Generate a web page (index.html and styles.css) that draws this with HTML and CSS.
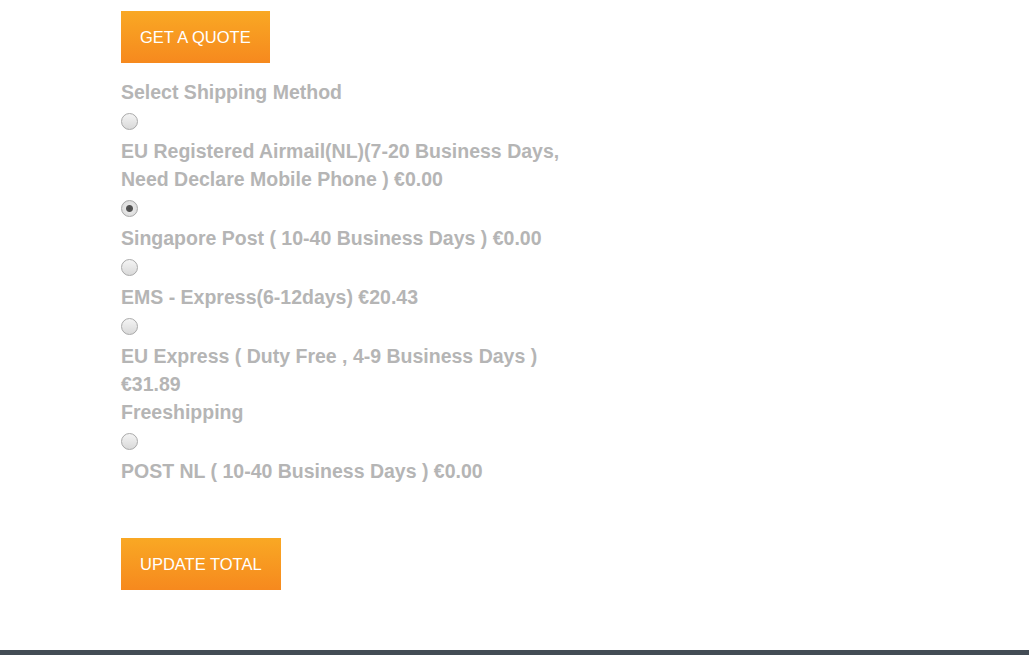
FILE: index.html
```html
<!DOCTYPE html>
<html lang="en">
<head>
  <meta charset="UTF-8" />
  <title>Shopping Cart - Shipping</title>
  <meta name="viewport" content="width=device-width, initial-scale=1.0" />
  <link rel="stylesheet" href="styles.css">
</head>
<body>
  <div class="content">
    <button class="btn">GET A QUOTE</button>

    <form class="shipping">
      <h3>Select Shipping Method</h3>

      <div class="option">
        <input type="radio" name="ship" id="ship1" />
        <label for="ship1">EU Registered Airmail(NL)(7-20 Business Days, Need Declare Mobile Phone ) €0.00</label>
      </div>
      <div class="option">
        <input type="radio" name="ship" id="ship2" checked />
        <label for="ship2">Singapore Post ( 10-40 Business Days ) €0.00</label>
      </div>
      <div class="option">
        <input type="radio" name="ship" id="ship3" />
        <label for="ship3">EMS - Express(6-12days) €20.43</label>
      </div>
      <div class="option">
        <input type="radio" name="ship" id="ship4" />
        <label for="ship4">EU Express ( Duty Free , 4-9 Business Days ) €31.89</label>
      </div>

      <h3>Freeshipping</h3>
      <div class="option">
        <input type="radio" name="ship" id="ship5" />
        <label for="ship5">POST NL ( 10-40 Business Days ) €0.00</label>
      </div>

      <button type="button" class="btn update">UPDATE TOTAL</button>
    </form>
  </div>

  <div class="footer"></div>
</body>
</html>
```

FILE: styles.css
```css
body {
  font-family: 'Liberation Sans', Arial, sans-serif;
  margin: 0;
  padding: 0;
  background: #fff;
  height: 655px;
  display: flex;
  flex-direction: column;
  overflow: hidden;
}

.content {
  flex: 1;
  padding: 11px 0 0 121px;
}

.btn {
  display: block;
  height: 52px;
  padding: 0 19px;
  border: none;
  border-radius: 0;
  background: linear-gradient(to bottom, #f9a824, #f6891e);
  color: #fff;
  font-family: 'Liberation Sans', Arial, sans-serif;
  font-size: 16.5px;
  cursor: pointer;
}

.shipping {
  width: 455px;
  margin-top: 15px;
  color: #b5b5b5;
  font-size: 19.5px;
  font-weight: bold;
  line-height: 28px;
}

.shipping h3 {
  margin: 0;
  font-size: 19.5px;
  line-height: 28px;
}

.option input {
  display: block;
  appearance: none;
  -webkit-appearance: none;
  width: 17px;
  height: 17px;
  margin: 7px 0 7px 0;
  border: 1px solid #a9a9a9;
  border-radius: 50%;
  background: linear-gradient(to bottom, #f4f4f4, #d9d9d9);
  box-sizing: border-box;
}

.option input:checked {
  background: radial-gradient(circle, #4a4a4a 0, #555 3px, #e6e6e6 4px, #dcdcdc 8px);
}

.option label {
  display: block;
}

.update {
  margin-top: 53px;
}

.footer {
  height: 5px;
  background: #434c55;
}
```
